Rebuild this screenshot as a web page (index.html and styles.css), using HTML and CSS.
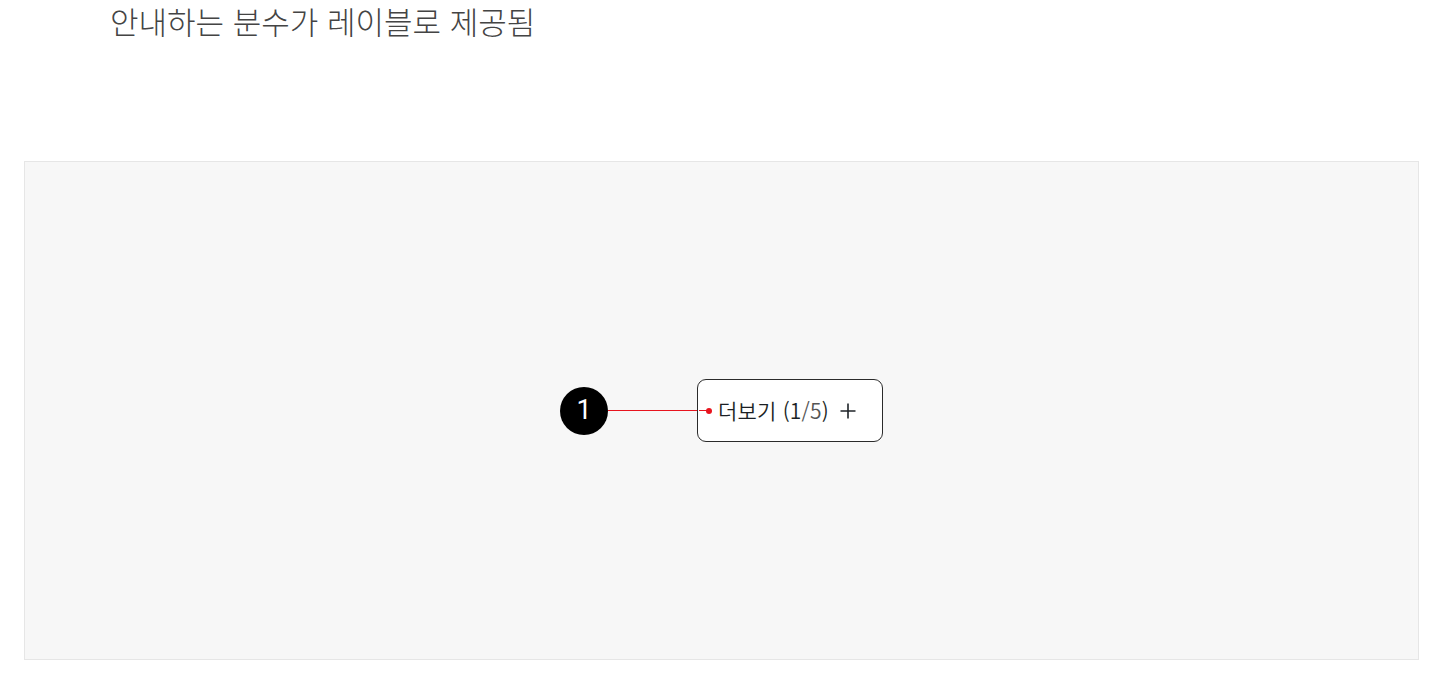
FILE: index.html
```html
<!DOCTYPE html>
<html lang="ko">
<head>
<meta charset="utf-8">
<link rel="stylesheet" href="styles.css">
</head>
<body>
  <h2 class="title">안내하는 분수가 레이블로 제공됨</h2>
  <div class="canvas">
    <div class="diagram">
      <div class="badge">1</div>
      <div class="connector"></div>
      <button class="more">
        <span class="dot"></span>
        <span class="label">더보기 (1<span class="muted">/5</span>)</span>
        <svg class="plus" width="16" height="16" viewBox="0 0 16 16" aria-hidden="true">
          <path d="M8 0.5V15.5M0.5 8H15.5" stroke="#1f2328" stroke-width="1.6" fill="none"/>
        </svg>
      </button>
    </div>
  </div>
</body>
</html>
```

FILE: styles.css
```css
html, body {
  margin: 0;
  padding: 0;
  background: #ffffff;
  font-family: "Noto Sans CJK KR", "Noto Sans", sans-serif;
}

.title {
  margin: 0;
  padding: 1px 0 0 110px;
  height: 161px;
  box-sizing: border-box;
  font-size: 31px;
  line-height: 40px;
  font-weight: 300;
  color: #444444;
}

.canvas {
  margin: 0 24px;
  width: 1395px;
  height: 499px;
  box-sizing: border-box;
  background: #f7f7f7;
  border: 1px solid #e6e6e6;
  display: flex;
  align-items: center;
  justify-content: center;
}

.diagram {
  display: flex;
  align-items: center;
}

.badge {
  width: 48px;
  height: 48px;
  border-radius: 50%;
  background: #000000;
  color: #ffffff;
  font-family: "Roboto", "Noto Sans", sans-serif;
  font-size: 27px;
  font-weight: 400;
  display: flex;
  align-items: center;
  justify-content: center;
  line-height: 1;
}

.connector {
  width: 89px;
  height: 1px;
  background: #e8141e;
}

.more {
  position: relative;
  width: 186px;
  height: 63px;
  box-sizing: border-box;
  border: 1px solid #2b2b2b;
  border-radius: 9px;
  background: #ffffff;
  display: flex;
  align-items: center;
  padding: 0;
  font-family: "Noto Sans CJK KR", "Noto Sans", sans-serif;
  font-size: 21px;
  font-weight: 350;
  color: #1b1f24;
  cursor: pointer;
}

.dot {
  position: relative;
  width: 6px;
  height: 6px;
  border-radius: 50%;
  background: #e8141e;
  margin-left: 8px;
  margin-right: 6px;
}

.dot::before {
  content: "";
  position: absolute;
  right: 3px;
  top: 2.5px;
  width: 10px;
  height: 1px;
  background: #e8141e;
}

.label {
  line-height: 1;
  letter-spacing: 0.2px;
}

.muted {
  color: #555555;
}

.plus {
  margin-left: 11px;
  display: block;
}
```
